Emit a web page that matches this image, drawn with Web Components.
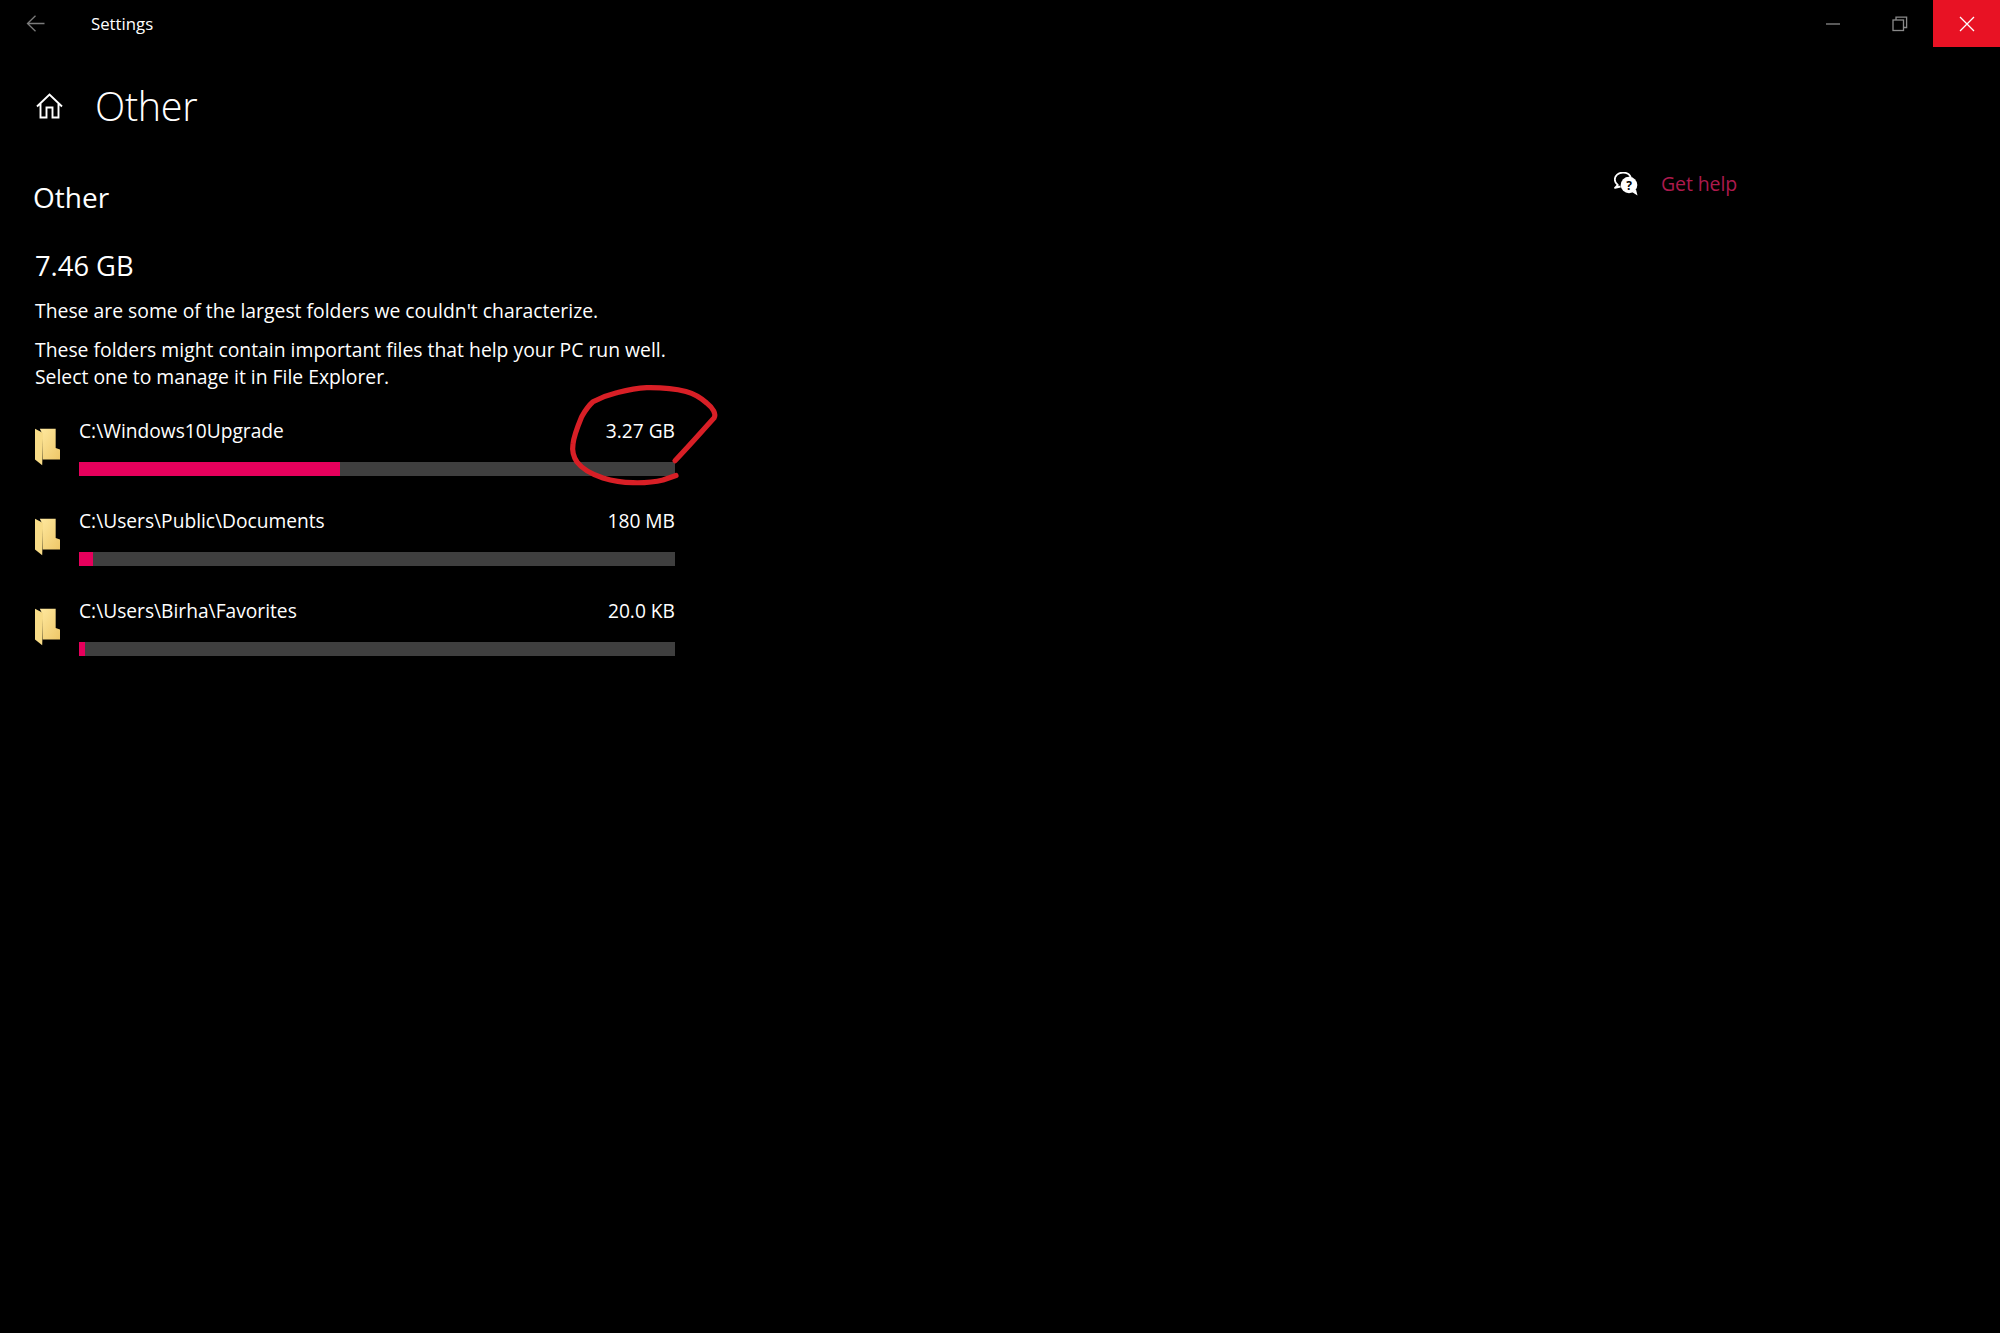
<!DOCTYPE html>
<html lang="en">
<head>
<meta charset="utf-8">
<title>Settings</title>
<style>
html,body{margin:0;padding:0;background:#000;}
body{width:2000px;height:1333px;overflow:hidden;font-family:"Open Sans","Noto Sans","Liberation Sans",sans-serif;color:#fff;}
</style>
</head>
<body>
<settings-app>
  <title-bar slot="bar" label="Settings"></title-bar>
  <page-header slot="header" label="Other"></page-header>
  <section-head slot="main" title-text="Other" size="7.46 GB"></section-head>
  <desc-text slot="main" gap="0">These are some of the largest folders we couldn't characterize.</desc-text>
  <desc-text slot="main" gap="1">These folders might contain important files that help your PC run well.<br>Select one to manage it in File Explorer.</desc-text>
  <folder-list slot="main">
    <folder-row path="C:\Windows10Upgrade" size="3.27 GB" used="261"></folder-row>
    <folder-row path="C:\Users\Public\Documents" size="180 MB" used="14"></folder-row>
    <folder-row path="C:\Users\Birha\Favorites" size="20.0 KB" used="6"></folder-row>
  </folder-list>
  <help-link slot="aside">Get help</help-link>
  <ink-circle slot="ink"></ink-circle>
</settings-app>
<script>
function def(name, html, init){
  customElements.define(name, class extends HTMLElement{
    constructor(){super();this.attachShadow({mode:'open'}).innerHTML=html;}
    connectedCallback(){if(init)init.call(this,this.shadowRoot);}
  });
}
def('settings-app',`<style>
:host{display:block;position:relative;width:2000px;height:1333px;background:#000;overflow:hidden}
.body{display:flex;justify-content:space-between}
.left{width:640px;padding-left:35px;display:flex;flex-direction:column}
.right{width:386px}
</style>
<slot name="bar"></slot>
<slot name="header"></slot>
<div class="body"><div class="left"><slot name="main"></slot></div><div class="right"><slot name="aside"></slot></div></div>
<slot name="ink"></slot>`);

def('title-bar',`<style>
:host{display:flex;height:47px;align-items:flex-start;color:#fff}
.back{width:91px;flex:none;height:47px}
.back svg{display:block;margin:15px 0 0 26px}
.label{flex:1;line-height:22px;padding-top:13px;font-size:16.8px}
.btn{width:67px;height:47px;display:flex;align-items:center;justify-content:center}
.close{background:#e81224}
</style>
<div class="back"><svg width="20" height="18" viewBox="0 0 20 18" fill="none" stroke="#7b7b7b" stroke-width="1.3"><path d="M1.5 8.500H18.500M9.500 .8L1.500 8.500L9.500 16.200"/></svg></div>
<div class="label"></div>
<div class="btn"><svg width="16" height="2" viewBox="0 0 16 2"><path d="M1 1H15" stroke="#8a8a8a" stroke-width="1.3"/></svg></div>
<div class="btn"><svg width="16" height="16" viewBox="0 0 16 16" fill="none" stroke="#8a8a8a" stroke-width="1.3"><rect x="1" y="4" width="10.500" height="10.500"/><path d="M4 4V1.200H14.600V11.500H11.500"/></svg></div>
<div class="btn close"><svg width="16" height="16" viewBox="0 0 16 16" fill="none" stroke="#fff" stroke-width="1.3"><path d="M1 1L15 15M15 1L1 15"/></svg></div>`,
function(r){r.querySelector('.label').textContent=this.getAttribute('label');});

def('page-header',`<style>
:host{display:flex;align-items:center;height:78px;padding-top:20px;margin-bottom:33.5px;padding-left:36px}
svg{display:block;flex:none}
.t{margin-left:32px;font-size:39.5px;font-weight:300;line-height:78px;letter-spacing:-.3px}
</style>
<svg width="27" height="26" viewBox="0 0 27 26" fill="none" stroke="#fff" stroke-width="1.9"><path d="M1 13.500L13.500 1.500L26 13.500M4.500 10.500V24.500H10.500V14.500H16.500V24.500H22.500V10.500"/></svg>
<div class="t"></div>`,
function(r){r.querySelector('.t').textContent=this.getAttribute('label');});

def('section-head',`<style>
:host{display:block}
.a{font-size:28px;line-height:36px;margin-left:-2px;height:36px}
.b{font-size:27.3px;line-height:36px;margin-top:33px;height:36px}
</style><div class="a"></div><div class="b"></div>`,
function(r){r.querySelector('.a').textContent=this.getAttribute('title-text');r.querySelector('.b').textContent=this.getAttribute('size');});

def('desc-text',`<style>
:host{display:block;font-size:19.35px;line-height:27px}
</style><slot></slot>`,
function(r){this.style.marginTop=this.getAttribute('gap')==='1'?'12px':'13px';});

def('folder-list',`<style>
:host{display:flex;flex-direction:column;margin-top:26.5px}
</style><slot></slot>`);

def('folder-row',`<style>
:host{display:flex;height:90px;font-size:19.2px}
svg{flex:none;display:block;margin-top:12px;width:25px;height:38px}
.c{margin-left:19px;width:597px;padding-top:1px;display:flex;flex-direction:column}
.top{display:flex;justify-content:space-between;line-height:27px;height:27px}
.bar{margin-top:18px;height:14px;background:#3f3f3f;display:flex}
.fill{height:14px;background:#e6005c}
</style>
<svg viewBox="0 0 26 38"><defs><linearGradient id="g" x1="0" y1="0" x2="1" y2="1"><stop offset="0" stop-color="#ffe9a0"/><stop offset="1" stop-color="#eec768"/></linearGradient></defs>
<path d="M5 0H21.500V20L26 21.500V32H8V6Z" fill="url(#g)"/><path d="M0 0L8.500 4.500L7.500 38L0 32Z" fill="#f8dc88"/></svg>
<div class="c"><div class="top"><span class="p"></span><span class="s"></span></div><div class="bar"><div class="fill"></div></div></div>`,
function(r){r.querySelector('.p').textContent=this.getAttribute('path');r.querySelector('.s').textContent=this.getAttribute('size');r.querySelector('.fill').style.width=this.getAttribute('used')+'px';});

def('help-link',`<style>
:host{display:flex;align-items:center;margin-top:-9px;font-size:19.5px;color:#ad1a4d;letter-spacing:-.1px}
svg{display:block;flex:none;width:24px;height:24px}
span{margin-left:23px;line-height:28px}
</style>
<svg viewBox="0 0 24 24"><path d="M9 .6C4.300 .6.8 3.700.8 7.500c0 2.300 1.200 4.200 3 5.500L1 15.800l5.600-1.300" fill="#000" stroke="#fff" stroke-width="1.800" stroke-linejoin="round"/><path d="M9 .6c4 0 6.800 2 7.700 4.800" fill="none" stroke="#fff" stroke-width="1.800"/><circle cx="15" cy="13" r="8.300" fill="#fff"/><path d="M18 20l5.500 3.500-1.500-6z" fill="#fff"/><text x="15" y="17.500" text-anchor="middle" font-size="12" font-weight="700" font-family="Open Sans" fill="#000">?</text></svg>
<span><slot></slot></span>`);

def('ink-circle',`<style>
:host{display:block;position:absolute;left:0;top:0;width:2000px;height:1333px;pointer-events:none}
svg{display:block}
</style>
<svg width="2000" height="1333" viewBox="0 0 2000 1333" fill="none"><path d="M675 460.700C690 445 703 430 714 418C716.500 414 713 408 706.700 403C700 397 695 394 686 391.500C672 388 660 387.500 646.700 387.700C634 388.500 628 390 616.700 392.700C607 395 600 398 593 401.700C587 407 585 411 581.700 416.700C577 428 574 435 573 444C572 450 573 456 577 462C583 470 594 475 603 478C613 481 623 482.500 633 482.700C645 483 655 482 663 480L676 475.500" stroke="#d81f26" stroke-width="5.200" stroke-linecap="round" stroke-linejoin="round"/></svg>`);
</script>
</body>
</html>
